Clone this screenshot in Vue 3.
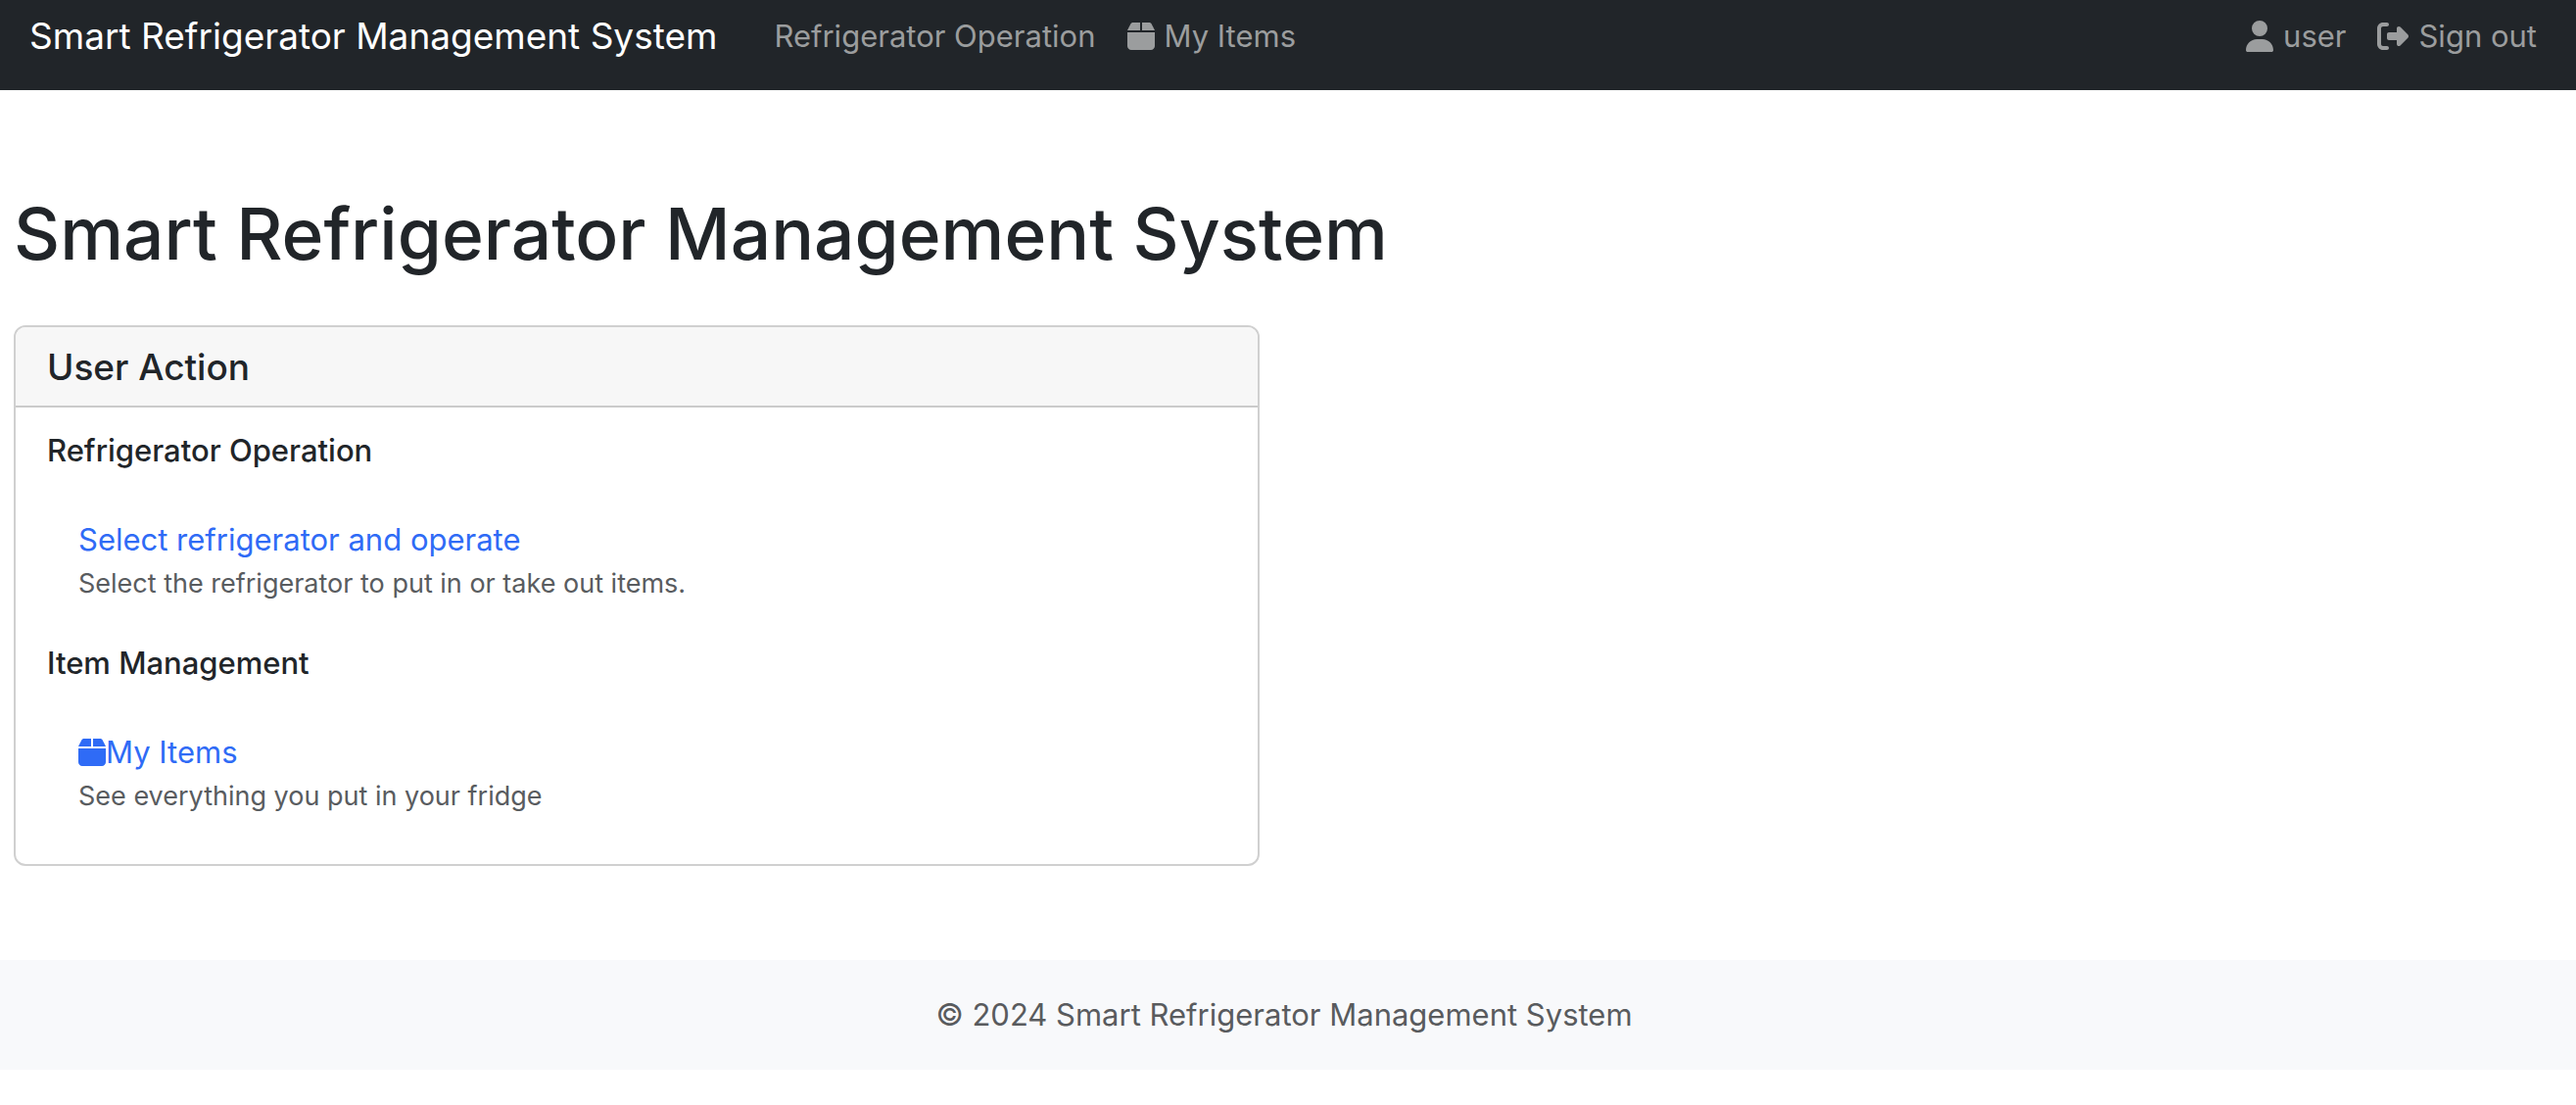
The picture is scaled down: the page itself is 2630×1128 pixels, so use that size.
<script setup>
const paths = {
  boxLeft: 'M50.700 58.500 0 160H208V32H93.700C75.500 32 58.900 42.300 50.700 58.500Z',
  boxRight: 'M240 160H448L397.300 58.500C389.100 42.300 372.500 32 354.300 32H240Z',
  boxBody: 'M448 192H0V416C0 451.300 28.700 480 64 480H384C419.300 480 448 451.300 448 416Z',
  user: 'M224 256a128 128 0 1 0 0-256 128 128 0 1 0 0 256zm-45.700 48C79.800 304 0 383.800 0 482.300 0 498.700 13.300 512 29.700 512H418.300c16.400 0 29.700-13.300 29.700-29.700 0-98.500-79.800-178.300-178.300-178.300Z',
  signOut: 'M377.900 105.900 500.700 228.700c7.200 7.200 11.300 17.100 11.300 27.300s-4.100 20.100-11.300 27.300L377.900 406.100c-6.400 6.400-15 9.900-24 9.900-18.700 0-33.900-15.200-33.900-33.900V320H192c-17.700 0-32-14.300-32-32v-64c0-17.700 14.300-32 32-32h128v-62.100c0-18.700 15.200-33.900 33.900-33.900 9 0 17.600 3.600 24 9.900zM160 96H96c-17.700 0-32 14.300-32 32v256c0 17.700 14.300 32 32 32h64c17.700 0 32 14.300 32 32s-14.300 32-32 32H96c-53 0-96-43-96-96V128C0 75 43 32 96 32h64c17.700 0 32 14.300 32 32s-14.300 32-32 32z'
}
const box = [paths.boxLeft, paths.boxRight, paths.boxBody]

const links = [
  { label: 'Refrigerator Operation' },
  { label: 'My Items', icon: box, width: 448 }
]
const account = [
  { label: 'user', icon: [paths.user], width: 448 },
  { label: 'Sign out', icon: [paths.signOut], width: 512 }
]
const sections = [
  {
    title: 'Refrigerator Operation',
    link: 'Select refrigerator and operate',
    text: 'Select the refrigerator to put in or take out items.'
  },
  {
    title: 'Item Management',
    link: 'My Items',
    icon: box,
    text: 'See everything you put in your fridge'
  }
]
</script>

<template>
  <div class="page">
    <nav class="navbar">
      <a class="brand" href="#">Smart Refrigerator Management System</a>
      <ul class="menu">
        <li v-for="item in links" :key="item.label">
          <a href="#" class="nav-link">
            <svg v-if="item.icon" class="icon" :viewBox="`0 0 ${item.width} 512`" aria-hidden="true">
              <path v-for="d in item.icon" :key="d" :d="d" />
            </svg>
            <span>{{ item.label }}</span>
          </a>
        </li>
      </ul>
      <ul class="menu account">
        <li v-for="item in account" :key="item.label">
          <a href="#" class="nav-link">
            <svg class="icon" :viewBox="`0 0 ${item.width} 512`" aria-hidden="true">
              <path v-for="d in item.icon" :key="d" :d="d" />
            </svg>
            <span>{{ item.label }}</span>
          </a>
        </li>
      </ul>
    </nav>

    <main class="content">
      <h1>Smart Refrigerator Management System</h1>
      <div class="row">
        <section class="card">
          <h2 class="card-header">User Action</h2>
          <div class="card-body">
            <div v-for="s in sections" :key="s.title" class="group">
              <h3>{{ s.title }}</h3>
              <div class="entry">
                <a href="#" class="entry-link">
                  <svg v-if="s.icon" class="icon" viewBox="0 0 448 512" aria-hidden="true">
                    <path v-for="d in s.icon" :key="d" :d="d" />
                  </svg>
                  <span>{{ s.link }}</span>
                </a>
                <p>{{ s.text }}</p>
              </div>
            </div>
          </div>
        </section>
      </div>
    </main>

    <footer class="footer">© 2024 Smart Refrigerator Management System</footer>
  </div>
</template>

<style>
body {
  margin: 0;
  background: #fff;
}
</style>

<style scoped>
.page {
  font-family: Inter, "Liberation Sans", sans-serif;
  font-size: 31px;
  line-height: 48px;
  color: #212529;
}
a {
  text-decoration: none;
}
h1,
h2,
h3,
p,
ul {
  margin: 0;
  padding: 0;
  font-weight: 500;
}
p {
  font-weight: 400;
}
.icon {
  height: 32px;
  flex: none;
  fill: currentColor;
}
.navbar {
  display: flex;
  align-items: flex-start;
  padding: 13px 40px 31px 30px;
  background: #212529;
}
.brand {
  color: #fff;
  font-size: 37px;
  margin-right: 58px;
  white-space: nowrap;
}
.menu {
  display: flex;
  gap: 32px;
  list-style: none;
}
.account {
  margin-left: auto;
}
.nav-link {
  display: flex;
  align-items: center;
  gap: 10px;
  color: #9b9d9e;
  font-weight: 400;
  white-space: nowrap;
}
.content {
  padding: 99px 14px 96px;
}
h1 {
  font-size: 73px;
  line-height: 96px;
}
.row {
  display: grid;
  grid-template-columns: 1fr 1fr;
  gap: 58px;
  margin-top: 45px;
}
.card {
  border: 2px solid #d0d0d0;
  border-radius: 12px;
  overflow: hidden;
}
.card-header {
  padding: 17px 32px 15px;
  border-bottom: 2px solid #cbcbcb;
  background: #f7f7f7;
  font-size: 37px;
}
.card-body {
  padding: 24px 32px 8px;
}
h3 {
  font-size: 31px;
  line-height: 40px;
}
.entry {
  padding: 47px 32px 40px;
}
.entry-link {
  display: flex;
  align-items: center;
  width: fit-content;
  color: #2f6bf6;
}
p {
  font-size: 27px;
  line-height: 42px;
  color: #595c5f;
}
.footer {
  padding: 32px 8px 32px 0;
  background: #f8f9fb;
  color: #595b5e;
  text-align: center;
}
</style>
